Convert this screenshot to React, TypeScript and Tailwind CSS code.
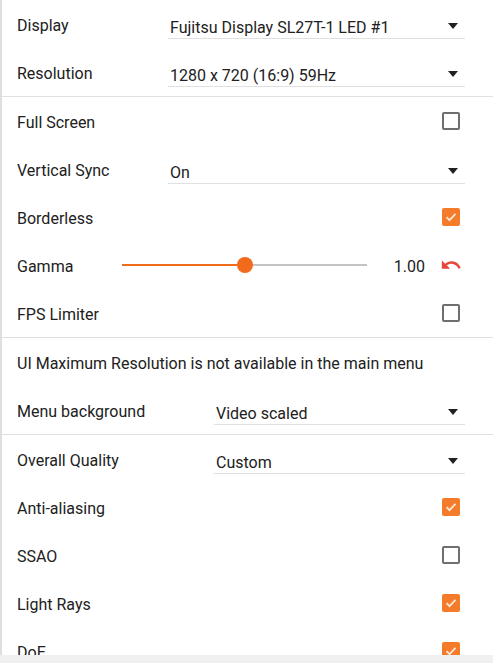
import React from 'react'

const font = { fontFamily: 'Roboto, "Noto Sans", sans-serif' }

function Arrow() {
  return (
    <svg width="10" height="6" viewBox="0 0 10 6" className="shrink-0">
      <path d="M0 0h10L5 6z" fill="#212121" />
    </svg>
  )
}

function Dropdown({ value }: { value: string }) {
  return (
    <div className="flex-1 mt-1 h-[25px] flex items-center justify-between border-b border-[#e0e0e0] pl-[2px] pr-[7px]">
      <span className="pt-1">{value}</span>
      <Arrow />
    </div>
  )
}

function Checkbox({ checked }: { checked?: boolean }) {
  if (checked) {
    return (
      <div className="w-[18px] h-[18px] rounded-[2px] bg-[#f47b2a] flex items-center justify-center">
        <svg width="12" height="10" viewBox="0 0 12 10">
          <path d="M1.5 5.2l3 3 6-6.4" fill="none" stroke="#fde7d6" strokeWidth="1.8" />
        </svg>
      </div>
    )
  }
  return <div className="w-[18px] h-[18px] rounded-[2px] border-2 border-[#6f6f6f]" />
}

function SelectRow({ label, value, labelW }: { label: string; value: string; labelW: string }) {
  return (
    <div className="h-12 flex items-center pr-[28px]">
      <span className={`${labelW} pt-1`}>{label}</span>
      <Dropdown value={value} />
    </div>
  )
}

function CheckRow({ label, checked }: { label: string; checked?: boolean }) {
  return (
    <div className="h-12 flex items-center justify-between pr-[33px]">
      <span className="pt-1">{label}</span>
      <Checkbox checked={checked} />
    </div>
  )
}

export default function App() {
  return (
    <div className="h-[663px] flex flex-col bg-[#f0f0f0] text-[16px] text-[#212121]" style={font}>
      <div className="h-[655px] overflow-hidden bg-white border-l-2 border-[#dedede] pl-[15px]">
        {/* Display */}
        <div className="-ml-[15px] pl-[15px] border-b border-[#e0e0e0]">
          <SelectRow label="Display" value="Fujitsu Display SL27T-1 LED #1" labelW="w-[151px]" />
          <SelectRow label="Resolution" value="1280 x 720 (16:9) 59Hz" labelW="w-[151px]" />
        </div>

        {/* Window */}
        <div className="-ml-[15px] pl-[15px] border-b border-[#e0e0e0]">
          <CheckRow label="Full Screen" />
          <SelectRow label="Vertical Sync" value="On" labelW="w-[151px]" />
          <CheckRow label="Borderless" checked />
          <div className="h-12 flex items-center">
            <span className="w-[105px] pt-1">Gamma</span>
            <div className="relative w-[245px] h-[2px] bg-[#c4c4c4]">
              <div className="absolute left-0 top-0 h-[2px] w-[123px] bg-[#f26a1b]" />
              <div className="absolute left-[115px] -top-[7px] w-4 h-4 rounded-full bg-[#f26a1b]" />
            </div>
            <span className="w-[58px] text-right pt-1">1.00</span>
            <svg width="22" height="22" viewBox="0 0 24 24" className="ml-[15px]">
              <path
                d="M12.5 8c-2.65 0-5.05.99-6.9 2.6L2 7v9h9l-3.62-3.62c1.39-1.16 3.16-1.88 5.12-1.88 3.54 0 6.55 2.31 7.6 5.5l2.37-.78C21.08 11.03 17.15 8 12.5 8z"
                fill="#e8463a"
              />
            </svg>
          </div>
          <CheckRow label="FPS Limiter" />
        </div>

        {/* Menu */}
        <div className="-ml-[15px] pl-[15px] border-b border-[#e0e0e0]">
          <div className="h-12 flex items-center pt-1">UI Maximum Resolution is not available in the main menu</div>
          <SelectRow label="Menu background" value="Video scaled" labelW="w-[197px]" />
        </div>

        {/* Quality */}
        <div>
          <SelectRow label="Overall Quality" value="Custom" labelW="w-[197px]" />
          <CheckRow label="Anti-aliasing" checked />
          <CheckRow label="SSAO" />
          <CheckRow label="Light Rays" checked />
          <CheckRow label="DoE" checked />
        </div>
      </div>
    </div>
  )
}
